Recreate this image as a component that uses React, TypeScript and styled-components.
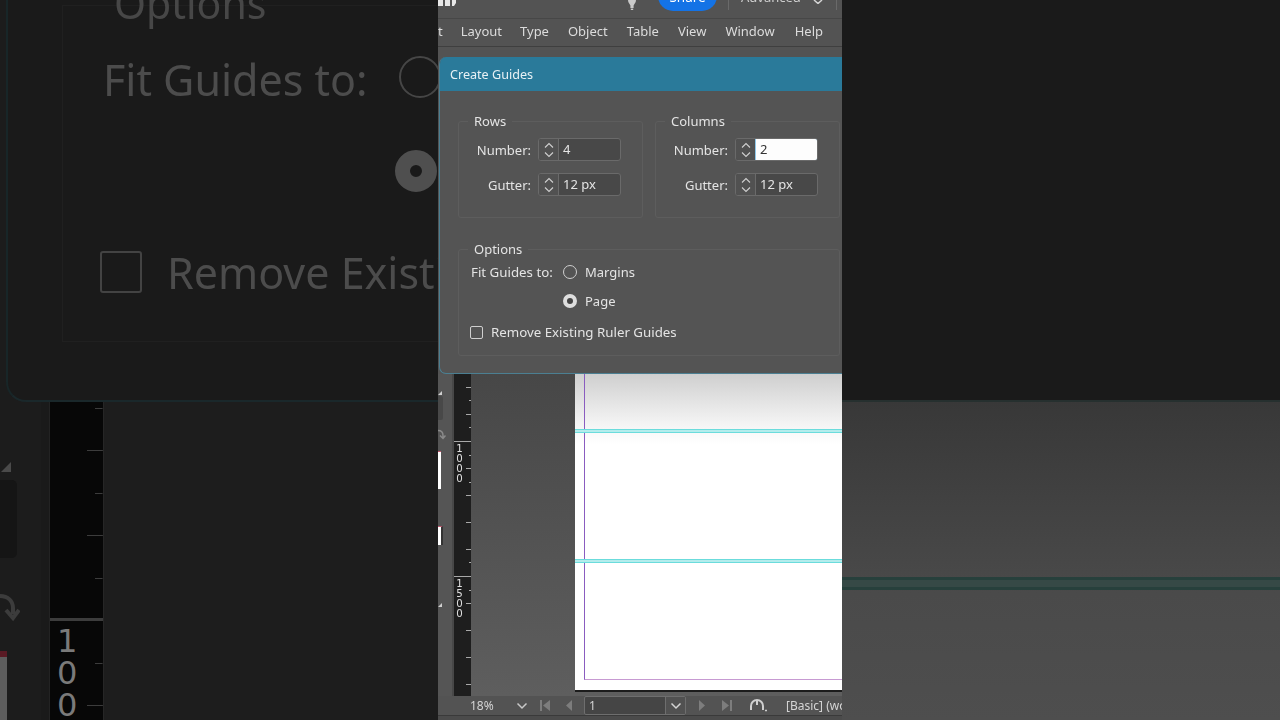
import React from 'react';
import styled, { createGlobalStyle } from 'styled-components';

const FONT = `"Noto Sans", "Open Sans", sans-serif`;

const GlobalStyle = createGlobalStyle`
  html, body {
    margin: 0;
    width: 1280px;
    height: 720px;
    overflow: hidden;
    background: #1a1a1a;
    font-family: ${FONT};
  }
  * { box-sizing: border-box; }
`;

const Screen = styled.div`
  display: flex;
  width: 1280px;
  height: 720px;
  overflow: hidden;
`;

/* ---------- left, zoomed and dimmed copy ---------- */

const SideLeft = styled.div`
  width: 438px;
  height: 720px;
  flex: none;
  display: flex;
  flex-direction: column;
  overflow: hidden;
  background: #1c1c1c;
`;

const BackdropDialog = styled.div`
  height: 402px;
  flex: none;
  margin-left: 6px;
  padding: 5px 0 58px 54px;
  background: #1a1a1a;
  border-left: 2px solid #182628;
  border-bottom: 2px solid #1a282b;
  border-bottom-left-radius: 20px;
`;

const BackdropGroup = styled.div`
  height: 337px;
  width: 500px;
  border: 1px solid #202020;
  color: #4c4c4c;
  font-size: 43px;
  white-space: nowrap;
  filter: blur(0.7px);
`;

const BackdropLegend = styled.div`
  height: 27px;
  margin-top: -23px;
  margin-left: 51px;
  line-height: 40px;
  font-size: 41px;
  color: #474747;
`;

const BackdropRow = styled.div<{ $top: number; $left: number }>`
  display: flex;
  align-items: center;
  height: 46px;
  margin-top: ${p => p.$top}px;
  margin-left: ${p => p.$left}px;
`;

const BackdropRadio = styled.span<{ $on?: boolean }>`
  width: 42px;
  height: 42px;
  flex: none;
  border-radius: 50%;
  margin-left: 31px;
  margin-top: -4px;
  border: ${p => (p.$on ? '15px solid #4f4f4f' : '2px solid #464646')};
`;

const BackdropLabelGap = styled.span`
  width: 261px;
  flex: none;
`;

const BackdropCheck = styled.span`
  width: 42px;
  height: 42px;
  flex: none;
  margin-right: 25px;
  border: 2px solid #434343;
  border-radius: 3px;
`;

const BackdropLower = styled.div`
  flex: 1;
  display: flex;
  min-height: 0;
`;

const BackdropTools = styled.div`
  width: 50px;
  flex: none;
  border-right: 1px solid #232323;
  box-shadow: inset -8px 0 0 #1a1a1a;
`;

const BackdropTri = styled.div`
  width: 10px;
  height: 10px;
  margin: 60px 0 0 1px;
  background: #4a4a4a;
  clip-path: polygon(100% 0, 100% 100%, 0 100%);
`;

const BackdropToolBox = styled.div`
  width: 17px;
  height: 78px;
  margin-top: 8px;
  background: #151515;
  border-radius: 0 5px 5px 0;
`;

const BackdropArrow = styled.svg`
  display: block;
  margin-top: 34px;
`;

const BackdropSwatch = styled.div`
  width: 7px;
  height: 80px;
  margin-top: 25px;
  background: #5d5d5d;
  border-top: 6px solid #5a1a24;
`;

const BackdropPasteboard = styled.div`
  flex: 1;
  background: #1d1d1d;
  border-left: 1px solid #262626;
`;

/* ---------- ruler, used in both scales ---------- */

const Ruler = styled.div<{ $width: number }>`
  width: ${p => p.$width}px;
  flex: none;
  overflow: hidden;
  background: #1e1e1e;
`;

const DimRuler = styled(Ruler)`
  background: #070707;
`;

const RulerInner = styled.div<{ $offset: number }>`
  margin-top: ${p => p.$offset}px;
`;

const RulerSegment = styled.div<{ $scale: number; $tick: string }>`
  height: ${p => 135 * p.$scale}px;
  padding: ${p => 1.5 * p.$scale}px 0 0 ${p => 2.2 * p.$scale}px;
  border-top: ${p => Math.max(1, Math.round(p.$scale))}px solid ${p => p.$tick};
  background-repeat: no-repeat;
  background-position: right top, right top;
  background-size: ${p => 5 * p.$scale}px 100%, ${p => 2.4 * p.$scale}px 100%;
  background-image:
    repeating-linear-gradient(
      to bottom,
      transparent 0 ${p => 27 * p.$scale - 1}px,
      ${p => p.$tick} ${p => 27 * p.$scale - 1}px ${p => 27 * p.$scale}px
    ),
    repeating-linear-gradient(
      to bottom,
      transparent 0 ${p => 13.5 * p.$scale - 1}px,
      ${p => p.$tick} ${p => 13.5 * p.$scale - 1}px ${p => 13.5 * p.$scale}px
    );
`;

const RulerDigit = styled.div<{ $scale: number; $color: string }>`
  font-family: "DejaVu Sans", sans-serif;
  font-size: ${p => 10.2 * p.$scale}px;
  line-height: ${p => 10.1 * p.$scale}px;
  height: ${p => 10.1 * p.$scale}px;
  color: ${p => p.$color};
`;

/* ---------- centre column ---------- */

const Center = styled.div`
  width: 404px;
  height: 720px;
  flex: none;
  display: flex;
  flex-direction: column;
  overflow: hidden;
  background: #535353;
  color: #e4e4e4;
  font-size: 13px;
  filter: blur(0.35px);
`;

const TopBar = styled.div`
  height: 19px;
  flex: none;
  display: flex;
  overflow: hidden;
  border-bottom: 1px solid #474747;
`;

const LogoStub = styled.svg`
  flex: none;
  display: block;
`;

const Bulb = styled.svg`
  flex: none;
  display: block;
  margin-left: 168px;
`;

const ShareButton = styled.div`
  width: 59px;
  height: 30px;
  flex: none;
  margin: -19px 0 0 19px;
  padding-top: 7px;
  border-radius: 15px;
  background: #1473e6;
  color: #fff;
  text-align: center;
  font-size: 13.5px;
  line-height: 18px;
`;

const TopDivider = styled.div<{ $left: number }>`
  width: 1px;
  height: 10px;
  flex: none;
  margin-left: ${p => p.$left}px;
  background: #6a6a6a;
`;

const Workspace = styled.div`
  flex: none;
  margin: -12px 0 0 12px;
  width: 60px;
  height: 18px;
  line-height: 18px;
  white-space: nowrap;
  color: #cfcfcf;
`;

const WorkspaceChevron = styled.svg`
  flex: none;
  display: block;
  margin-left: 12px;
`;

const MenuBar = styled.div`
  height: 28px;
  flex: none;
  display: flex;
  align-items: center;
  padding-bottom: 3px;
  border-bottom: 1px solid #3f3f3f;
  white-space: nowrap;
`;

const MenuItem = styled.span<{ $left: number }>`
  margin-left: ${p => p.$left}px;
  color: #dcdcdc;
`;

const Dialog = styled.div`
  height: 317px;
  flex: none;
  margin: 10px 0 0 1px;
  display: flex;
  flex-direction: column;
  background: #545454;
  border-left: 1px solid #4b7f92;
  border-bottom: 1px solid #4b7f92;
  border-radius: 7px 0 0 7px;
  overflow: hidden;
`;

const TitleBar = styled.div`
  height: 34px;
  flex: none;
  display: flex;
  align-items: center;
  padding-left: 10px;
  background: #2a7a9a;
  color: #e8f1f5;
  font-size: 12.6px;
`;

const DialogBody = styled.div`
  flex: 1;
  padding: 21px 1px 0 18px;
`;

const GroupRow = styled.div`
  display: flex;
  gap: 12px;
`;

const Group = styled.fieldset`
  width: 185px;
  flex: none;
  margin: 0;
  padding: 0;
  height: 106px;
  border: 1px solid #5d5d5d;
  border-radius: 3px;
`;

const OptionsGroup = styled(Group)`
  width: 382px;
  height: 116px;
  margin-top: 22px;
`;

const Legend = styled.legend`
  margin-left: 9px;
  padding: 0 6px;
  line-height: 18px;
  color: #e4e4e4;
`;

const FieldRow = styled.div<{ $top: number }>`
  display: flex;
  align-items: center;
  height: 23px;
  margin-top: ${p => p.$top}px;
`;

const FieldLabel = styled.label`
  width: 72px;
  flex: none;
  text-align: right;
`;

const Spinner = styled.div`
  width: 83px;
  height: 23px;
  flex: none;
  margin-left: 7px;
  display: flex;
  border: 1px solid #6a6a6a;
  border-radius: 3px;
  background: #484848;
  overflow: hidden;
`;

const SpinButtons = styled.div`
  width: 20px;
  flex: none;
  display: flex;
  align-items: center;
  justify-content: center;
  background: #515151;
  border-right: 1px solid #6a6a6a;
`;

const SpinValue = styled.div<{ $active?: boolean }>`
  flex: 1;
  padding-left: 4px;
  line-height: 20px;
  background: ${p => (p.$active ? '#fdfdfd' : 'transparent')};
  color: ${p => (p.$active ? '#333' : '#e4e4e4')};
  box-shadow: ${p => (p.$active ? '0 0 0 1px #8fc7e8' : 'none')};
`;

const OptionRow = styled.div<{ $top: number }>`
  display: flex;
  align-items: center;
  height: 20px;
  margin-top: ${p => p.$top}px;
  white-space: nowrap;
`;

const FitLabel = styled.span`
  width: 104px;
  flex: none;
  padding-left: 12px;
  font-size: 13.3px;
`;

const Radio = styled.span<{ $on?: boolean }>`
  width: 14px;
  height: 14px;
  flex: none;
  border-radius: 50%;
  margin-right: 8px;
  border: ${p => (p.$on ? '4.5px solid #dedede' : '1px solid #cfcfcf')};
  background: ${p => (p.$on ? '#444' : 'transparent')};
`;

const Check = styled.span`
  width: 13px;
  height: 13px;
  flex: none;
  margin: 0 8px 0 11px;
  border: 1px solid #cfcfcf;
  border-radius: 2px;
`;

const CheckLabel = styled.span`
  font-size: 13.3px;
`;

const Canvas = styled.div`
  flex: 1;
  min-height: 0;
  display: flex;
`;

const ToolStrip = styled.div`
  width: 16px;
  flex: none;
  background: #555;
  border-right: 2px solid #484848;
`;

const ToolTri = styled.div<{ $top: number }>`
  width: 4px;
  height: 4px;
  margin-top: ${p => p.$top}px;
  background: #d0d0d0;
  clip-path: polygon(100% 0, 100% 100%, 0 100%);
`;

const ToolBox = styled.div`
  width: 5px;
  height: 24px;
  margin-top: 1px;
  background: #484848;
  border-radius: 0 2px 2px 0;
`;

const ToolArrow = styled.svg`
  display: block;
  margin-top: 9px;
`;

const Swatch = styled.div<{ $top: number; $height: number; $framed?: boolean }>`
  width: ${p => (p.$framed ? 5 : 3)}px;
  height: ${p => p.$height}px;
  margin-top: ${p => p.$top}px;
  background: #fff;
  border-top: 1px solid #c45a72;
  border-right: ${p => (p.$framed ? '2px solid #333' : 'none')};
`;

const CanvasRight = styled.div`
  flex: 1;
  min-width: 0;
  display: flex;
  background: linear-gradient(#474747, #5e5e5e);
`;

const Pasteboard = styled.div`
  flex: 1;
  min-width: 0;
  padding: 0 0 5px 104px;
`;

const Page = styled.div`
  position: relative;
  height: 316px;
  padding-left: 9px;
  padding-bottom: 10px;
  background: linear-gradient(#cfcfcf 0, #f4f4f4 50px, #fff 70px);
  box-shadow: 0 2px 0 #1c1c1c;
`;

const MarginBox = styled.div`
  height: 100%;
  border-left: 1px solid #8a5cc0;
  border-bottom: 1px solid #c79ad2;
`;

const Guide = styled.div<{ $top: number }>`
  position: absolute;
  left: 0;
  right: 0;
  top: ${p => p.$top}px;
  height: 4px;
  border-top: 1px solid #6bdcdc;
  border-bottom: 1px solid #6bdcdc;
  background: #b4ecec;
`;

const StatusBar = styled.div`
  height: 19px;
  flex: none;
  display: flex;
  align-items: center;
  margin-left: 16px;
  font-size: 12px;
  white-space: nowrap;
  color: #d4d4d4;
`;

const StatusIcon = styled.svg<{ $left: number }>`
  flex: none;
  display: block;
  margin-left: ${p => p.$left}px;
`;

const Zoom = styled.span`
  width: 50px;
  flex: none;
  padding-left: 16px;
`;

const PageSelect = styled.div`
  width: 102px;
  height: 19px;
  flex: none;
  margin-left: 12px;
  display: flex;
  border: 1px solid #6e6e6e;
  border-radius: 2px;
  background: #454545;
`;

const PageValue = styled.span`
  flex: 1;
  padding-left: 4px;
  line-height: 17px;
`;

const PageDrop = styled.span`
  width: 20px;
  flex: none;
  display: flex;
  align-items: center;
  justify-content: center;
  background: #515151;
  border-left: 1px solid #6e6e6e;
`;

const StatusText = styled.span`
  margin-left: 19px;
`;

const BottomEdge = styled.div`
  height: 5px;
  flex: none;
  background: #4b4b4b;
  border-top: 1px solid #3a3a3a;
`;

/* ---------- right side ---------- */

const SideRight = styled.div`
  width: 438px;
  height: 720px;
  flex: none;
  display: flex;
  flex-direction: column;
`;

const DarkBand = styled.div`
  height: 400px;
  flex: none;
  background: #1a1a1a;
`;

const GreyArea = styled.div`
  flex: 1;
  padding-top: 175px;
  background: linear-gradient(#383838, #4a4a4a 60%, #4e4e4e);
  border-top: 2px solid #26302f;
`;

const DimGuide = styled.div`
  height: 13px;
  background: #364946;
  border-top: 3px solid #27403c;
  border-bottom: 3px solid #27403c;
`;

/* ---------- icons ---------- */

const SpinIcon = () => (
  <svg width="12" height="18" viewBox="0 0 12 18" fill="none" stroke="#d0d0d0" strokeWidth="1.1">
    <path d="M2 6.5 6 2.5l4 4M2 11.5l4 4 4-4" />
  </svg>
);

const Chevron = () => (
  <svg width="12" height="8" viewBox="0 0 12 8" fill="none" stroke="#d4d4d4" strokeWidth="1.5">
    <path d="M1.5 1.5 6 6l4.5-4.5" />
  </svg>
);

interface RulerMarksProps {
  scale: number;
  tick: string;
  color: string;
  labels: string[];
}

const RulerMarks: React.FC<RulerMarksProps> = ({ scale, tick, color, labels }) => (
  <>
    {labels.map((label, i) => (
      <RulerSegment key={i} $scale={scale} $tick={tick}>
        {label.split('').map((d, j) => (
          <RulerDigit key={j} $scale={scale} $color={color}>{d}</RulerDigit>
        ))}
      </RulerSegment>
    ))}
  </>
);

const SpinField = ({ label, value, active }: { label: string; value: string; active?: boolean }) => (
  <>
    <FieldLabel>{label}</FieldLabel>
    <Spinner>
      <SpinButtons><SpinIcon /></SpinButtons>
      <SpinValue $active={active}>{value}</SpinValue>
    </Spinner>
  </>
);

const App: React.FC = () => (
  <Screen>
    <GlobalStyle />

    <SideLeft>
      <BackdropDialog>
        <BackdropGroup>
          <BackdropLegend>Options</BackdropLegend>
          <BackdropRow $top={46} $left={40}>
            <span>Fit Guides to:</span>
            <BackdropRadio />
          </BackdropRow>
          <BackdropRow $top={48} $left={40}>
            <BackdropLabelGap />
            <BackdropRadio $on />
          </BackdropRow>
          <BackdropRow $top={53} $left={37}>
            <BackdropCheck />
            <span>Remove Existing Ruler Guides</span>
          </BackdropRow>
        </BackdropGroup>
      </BackdropDialog>
      <BackdropLower>
        <BackdropTools>
          <BackdropTri />
          <BackdropToolBox />
          <BackdropArrow width="20" height="34" viewBox="0 0 20 34" fill="none" stroke="#3c3c3c" strokeWidth="4">
            <path d="M0 4c8 0 13 5 13 12v6M6 18l7 8 6-8" />
          </BackdropArrow>
          <BackdropSwatch />
        </BackdropTools>
        <DimRuler $width={53}>
          <RulerInner $offset={-209}>
            <RulerMarks scale={3.15} tick="#3c3c3c" color="#7a7a7a" labels={['', '100']} />
          </RulerInner>
        </DimRuler>
        <BackdropPasteboard />
      </BackdropLower>
    </SideLeft>

    <Center>
      <TopBar>
        <LogoStub width="19" height="6" viewBox="0 0 19 6" fill="#e8e8e8">
          <path d="M0 0h5v6H0zM7 0h5v6H7zM14 0h4v3l-2 3h-2z" />
        </LogoStub>
        <Bulb width="14" height="10" viewBox="0 0 14 10" fill="#c9c9c9">
          <path d="M3 0h8c0 3-2 4-2.400 5.500V8H5.400V5.500C5 4 3 3 3 0z" />
          <path d="M5.800 8.600h2.400V10H5.800z" />
        </Bulb>
        <ShareButton>Share</ShareButton>
        <TopDivider $left={11} />
        <Workspace>Advanced</Workspace>
        <WorkspaceChevron width="10" height="4" viewBox="0 0 10 4" fill="none" stroke="#d4d4d4" strokeWidth="1.5">
          <path d="M1 0l4 3.500L9 0" />
        </WorkspaceChevron>
        <TopDivider $left={13} />
      </TopBar>

      <MenuBar>
        <MenuItem $left={0}>t</MenuItem>
        <MenuItem $left={18}>Layout</MenuItem>
        <MenuItem $left={18}>Type</MenuItem>
        <MenuItem $left={19}>Object</MenuItem>
        <MenuItem $left={19}>Table</MenuItem>
        <MenuItem $left={19}>View</MenuItem>
        <MenuItem $left={19}>Window</MenuItem>
        <MenuItem $left={20}>Help</MenuItem>
      </MenuBar>

      <Dialog>
        <TitleBar>Create Guides</TitleBar>
        <DialogBody>
          <GroupRow>
            <Group>
              <Legend>Rows</Legend>
              <FieldRow $top={8}><SpinField label="Number:" value="4" /></FieldRow>
              <FieldRow $top={12}><SpinField label="Gutter:" value="12 px" /></FieldRow>
            </Group>
            <Group>
              <Legend>Columns</Legend>
              <FieldRow $top={8}><SpinField label="Number:" value="2" active /></FieldRow>
              <FieldRow $top={12}><SpinField label="Gutter:" value="12 px" /></FieldRow>
            </Group>
          </GroupRow>
          <OptionsGroup>
            <Legend>Options</Legend>
            <OptionRow $top={4}>
              <FitLabel>Fit Guides to:</FitLabel>
              <Radio />
              <span>Margins</span>
            </OptionRow>
            <OptionRow $top={9}>
              <FitLabel />
              <Radio $on />
              <span>Page</span>
            </OptionRow>
            <OptionRow $top={11}>
              <Check />
              <CheckLabel>Remove Existing Ruler Guides</CheckLabel>
            </OptionRow>
          </OptionsGroup>
        </DialogBody>
      </Dialog>

      <Canvas>
        <ToolStrip>
          <ToolTri $top={17} />
          <ToolBox />
          <ToolArrow width="8" height="12" viewBox="0 0 8 12" fill="none" stroke="#8a8a8a" strokeWidth="1.5">
            <path d="M0 1.500c3 0 5 2 5 5v2M2 6.500l3 3 2.500-3" />
          </ToolArrow>
          <Swatch $top={10} $height={38} />
          <Swatch $top={37} $height={19} $framed />
          <ToolTri $top={58} />
        </ToolStrip>
        <CanvasRight>
          <Ruler $width={17}>
            <RulerInner $offset={-68}>
              <RulerMarks scale={1} tick="#a8a8a8" color="#e0e0e0" labels={['', '1000', '1500']} />
            </RulerInner>
          </Ruler>
          <Pasteboard>
            <Page>
              <MarginBox />
              <Guide $top={55} />
              <Guide $top={185} />
            </Page>
          </Pasteboard>
        </CanvasRight>
      </Canvas>

      <StatusBar>
        <Zoom>18%</Zoom>
        <StatusIcon $left={12} width="12" height="8" viewBox="0 0 12 8" fill="none" stroke="#c8c8c8" strokeWidth="1.500">
          <path d="M1.500 1.500 6 6l4.500-4.500" />
        </StatusIcon>
        <StatusIcon $left={12} width="10" height="11" viewBox="0 0 10 11" fill="#7d7d7d">
          <path d="M0 0h2v11H0zM10 0v11L3 5.500z" />
        </StatusIcon>
        <StatusIcon $left={16} width="6" height="11" viewBox="0 0 6 11" fill="#7d7d7d">
          <path d="M6 0v11L0 5.500z" />
        </StatusIcon>
        <PageSelect>
          <PageValue>1</PageValue>
          <PageDrop><Chevron /></PageDrop>
        </PageSelect>
        <StatusIcon $left={13} width="6" height="11" viewBox="0 0 6 11" fill="#7d7d7d">
          <path d="M0 0v11l6-5.500z" />
        </StatusIcon>
        <StatusIcon $left={17} width="10" height="11" viewBox="0 0 10 11" fill="#7d7d7d">
          <path d="M0 0v11l7-5.500zM8 0h2v11H8z" />
        </StatusIcon>
        <StatusIcon $left={17} width="18" height="15" viewBox="0 0 18 15" fill="none" stroke="#cfcfcf" strokeWidth="2">
          <path d="M2 12V8a6 6 0 0 1 12 0v4M8 2v5" />
          <path d="M16 12.500h2" strokeWidth="1.500" />
        </StatusIcon>
        <StatusText>[Basic] (working)</StatusText>
      </StatusBar>
      <BottomEdge />
    </Center>

    <SideRight>
      <DarkBand />
      <GreyArea>
        <DimGuide />
      </GreyArea>
    </SideRight>
  </Screen>
);

export default App;
